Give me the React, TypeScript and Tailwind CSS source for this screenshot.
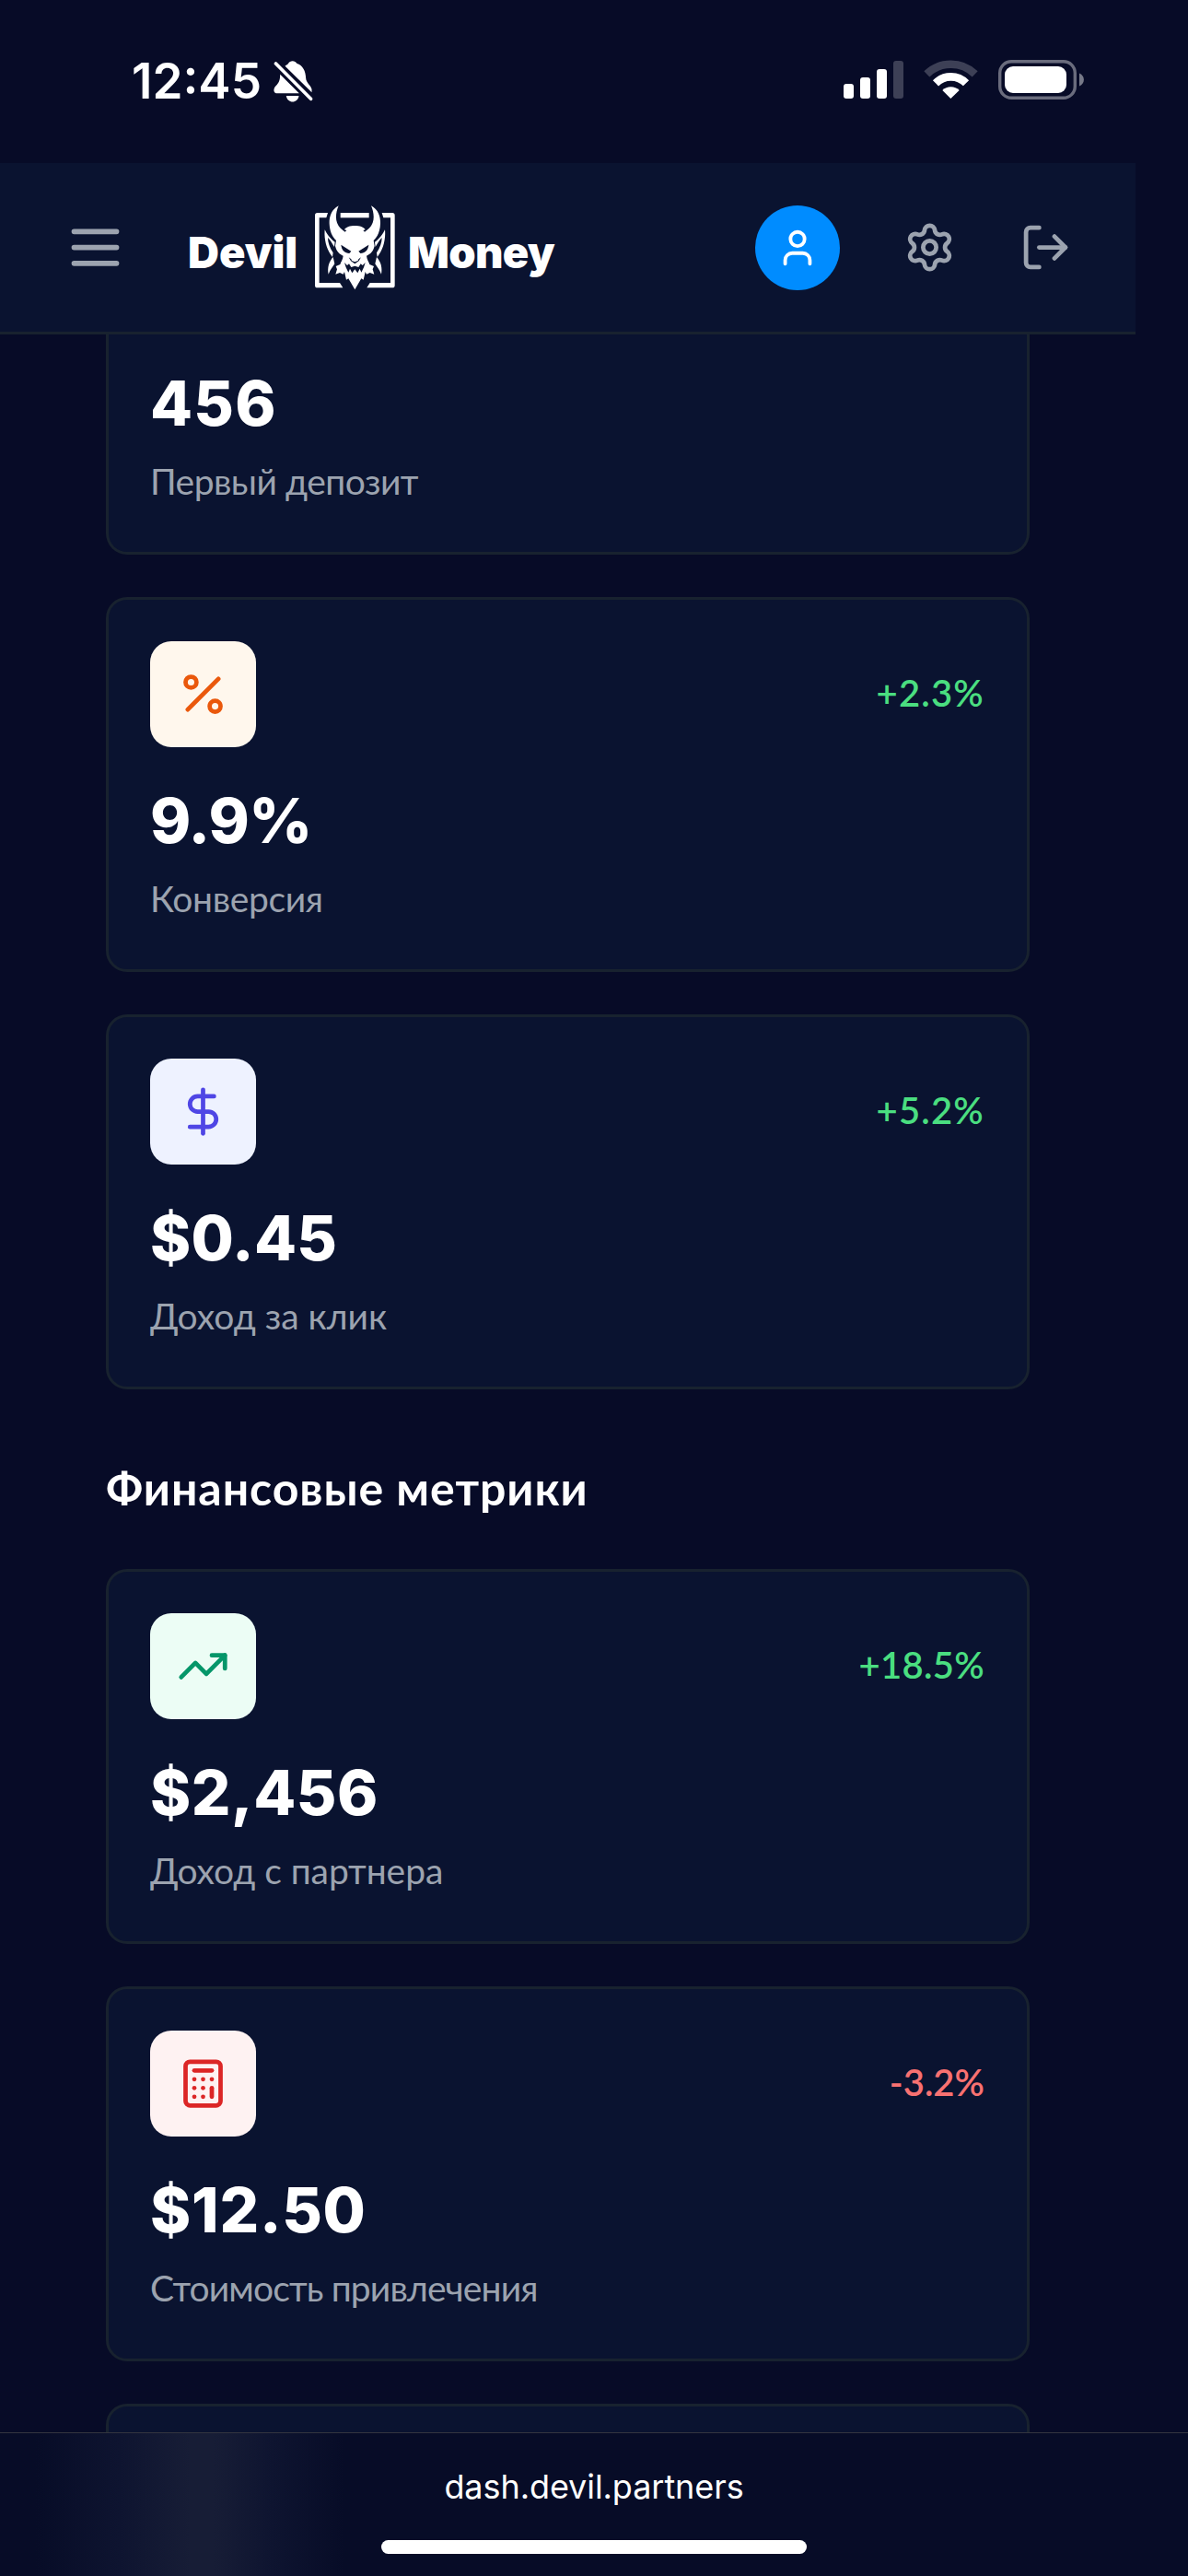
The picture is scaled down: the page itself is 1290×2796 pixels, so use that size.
import { Calculator, DollarSign, LogOut, Percent, Settings, TrendingUp, User } from "lucide-react"
import type { LucideIcon } from "lucide-react"

type Metric = {
  id: string
  icon: LucideIcon
  tile: string
  change: string
  changeStyle: string
  value: string
  valueStyle: string
  label: string
  labelStyle: string
}

const trafficMetrics: Metric[] = [
  {
    id: "conversion",
    icon: Percent,
    tile: "bg-[#fff7ed] text-[#ea580c]",
    change: "+2.3%",
    changeStyle: "text-[#4ade80] tracking-[0.03em]",
    value: "9.9%",
    valueStyle: "tracking-[-0.01em]",
    label: "Конверсия",
    labelStyle: "tracking-[-0.009em]",
  },
  {
    id: "epc",
    icon: DollarSign,
    tile: "bg-[#eef2ff] text-[#4f46e5]",
    change: "+5.2%",
    changeStyle: "text-[#4ade80] tracking-[0.03em]",
    value: "$0.45",
    valueStyle: "tracking-[0.004em]",
    label: "Доход за клик",
    labelStyle: "tracking-[0em]",
  },
]

const financeMetrics: Metric[] = [
  {
    id: "revenue",
    icon: TrendingUp,
    tile: "bg-[#ecfdf5] text-[#059669]",
    change: "+18.5%",
    changeStyle: "text-[#4ade80] tracking-[0.008em]",
    value: "$2,456",
    valueStyle: "tracking-[0.008em]",
    label: "Доход с партнера",
    labelStyle: "tracking-[-0.002em]",
  },
  {
    id: "cost",
    icon: Calculator,
    tile: "bg-[#fef2f2] text-[#dc2626]",
    change: "-3.2%",
    changeStyle: "text-[#f87171] tracking-[0em]",
    value: "$12.50",
    valueStyle: "tracking-[0.012em]",
    label: "Стоимость привлечения",
    labelStyle: "tracking-[-0.022em]",
  },
]

function StatusBar() {
  return (
    <div className="flex h-[177px] shrink-0 justify-between pl-[143px] pr-[113px] pt-[65px]">
      <div className="flex items-start">
        <span className="-mt-[9px] w-[154px] font-['Inter',sans-serif] text-[53px] font-semibold leading-[64px] text-white">
          12:45
        </span>
        <svg className="h-[46px] w-[43px]" viewBox="590 75 128 138" fill="white">
          <path d="M627 95C632 91 636 89 638 86C642 76 661 76 665 86C685 93 694 110 695 135C696 150 711 158 714 170V181Z" />
          <path d="M611 122L673 184H598C588 181 589 168 597 160C608 148 611 140 611 122Z" />
          <path d="M631 192H672C669 218 634 218 631 192Z" />
          <path d="M597 87L711 202" stroke="white" strokeWidth="11" strokeLinecap="round" />
        </svg>
      </div>
      <div className="flex items-start">
        <svg className="h-[42px] w-[65px]" viewBox="0 0 65 42" fill="white">
          <rect x="0" y="26" width="11" height="16" rx="3" />
          <rect x="18" y="19" width="11" height="23" rx="3" />
          <rect x="36" y="10" width="11" height="32" rx="3" />
          <rect x="54" y="1" width="11" height="41" rx="3" opacity="0.22" />
        </svg>
        <svg className="ml-[22px] h-[43px] w-[59px]" viewBox="369 75 177 129" fill="none" stroke="white" strokeWidth="26">
          <path d="M379 121A113 113 0 0 1 536 121" opacity="0.22" />
          <path d="M408 151A70 70 0 0 1 507 151" />
          <path d="M457 201L430 174A40 40 0 0 1 485 174Z" fill="white" stroke="none" />
        </svg>
        <svg className="ml-[22px] h-[43px] w-[93px]" viewBox="0 0 93 43">
          <rect x="1.7" y="1.7" width="81.6" height="39.6" rx="12.5" fill="none" stroke="white" strokeWidth="3.4" opacity="0.4" />
          <rect x="7" y="7" width="67" height="29" rx="9" fill="white" />
          <path d="M88 14.5C94.5 17 94.5 26 88 28.5Z" fill="white" opacity="0.45" />
        </svg>
      </div>
    </div>
  )
}

function DevilMark() {
  return (
    <svg className="h-[92px] w-[87px]" viewBox="66 38 261 276" fill="white">
      <path d="M108 62L103 78H80V290H147L157 306H74Q66 306 66 298V70Q66 62 74 62Z" />
      <path d="M284 62L289 78H312V290H245L235 306H318Q326 306 326 298V70Q326 62 318 62Z" />
      <path d="M149 62H242V78H149Z" />
      <path d="M143 39C118 52 112 78 113 98C114 122 122 140 135 152L132 170C137 190 146 196 158 202C157 214 150 222 148 230L134 236L138 246L133 262L147 257L158 262L162 254L168 280L175 276L196 312L217 276L224 280L230 254L234 262L245 257L259 262L254 246L258 236L244 230C242 222 235 214 234 202C246 196 255 190 260 170L257 152C270 140 278 122 279 98C280 78 274 52 249 39C257 58 260 78 254 94C248 110 238 116 228 124L223 119L230 117C222 100 170 100 162 117L169 119L164 124C154 116 144 110 138 94C132 78 135 58 143 39Z" />
      <path d="M98 117C95 150 104 182 123 206L125 192C114 176 108 158 108 143C116 150 121 160 129 173L131 157C118 148 106 134 98 117Z" />
      <path d="M294 117C297 150 288 182 269 206L267 192C278 176 284 158 284 143C276 150 271 160 263 173L261 157C274 148 286 134 294 117Z" />
      <path d="M125 206C111 222 106 240 110 262C116 246 124 238 130 228Z" />
      <path d="M267 206C281 222 286 240 282 262C276 246 268 238 262 228Z" />
      <g fill="#0a1330">
        <path d="M151 166L184 187L178 194C163 193 153 184 151 166Z" />
        <path d="M241 166L208 187L214 194C229 193 239 184 241 166Z" />
        <path d="M176 207L183 219L196 228L209 219L216 207L208 213L206 218L196 222L186 218L184 213Z" />
        <path d="M162 224L171 233L177 228L184 239L196 235L208 239L215 228L221 233L230 224L225 240L217 256L212 244L205 258L196 246L187 258L180 244L175 256L167 240Z" />
      </g>
    </svg>
  )
}

function Header() {
  return (
    <header className="flex h-[186px] w-[1233px] shrink-0 items-center border-b-[3px] border-[#18222f] bg-[#0a1330] pl-[69px] pr-[69px]">
      <svg className="h-[69px] w-[69px] text-[#9ca3af]" viewBox="0 0 24 24" fill="none" stroke="currentColor" strokeWidth="2" strokeLinecap="round">
        <path d="M4 6h16M4 12h16M4 18h16" />
      </svg>
      <div className="ml-[66px] flex items-center font-['Inter',sans-serif] text-[47px] font-black leading-[56px] text-white">
        <span className="w-[138px] pt-[11px]">Devil</span>
        <DevilMark />
        <span className="ml-[14px] pt-[11px] tracking-[-0.015em]">Money</span>
      </div>
      <div className="ml-auto flex items-center gap-[69px] text-[#9ca3af]">
        <div className="flex h-[92px] w-[92px] items-center justify-center rounded-full bg-[#008cff] text-white">
          <User size={46} />
        </div>
        <Settings size={57} />
        <LogOut size={57} />
      </div>
    </header>
  )
}

function MetricText({ value, valueStyle, label, labelStyle }: Pick<Metric, "value" | "valueStyle" | "label" | "labelStyle">) {
  return (
    <>
      <p className={`font-['Inter',sans-serif] text-[67px] font-extrabold leading-[93px] text-white ${valueStyle}`}>{value}</p>
      <p className={`mt-[10px] text-[39px] leading-[57px] text-[#9ca3af] ${labelStyle}`}>{label}</p>
    </>
  )
}

function MetricCard({ metric }: { metric: Metric }) {
  const Icon = metric.icon

  return (
    <div className="h-[407px] shrink-0 rounded-[23px] border-[3px] border-[#18222f] bg-[#0a1330] pl-[45px] pr-[46px] pt-[45px]">
      <div className="mb-[33px] flex items-center justify-between">
        <div className={`flex h-[115px] w-[115px] items-center justify-center rounded-[23px] ${metric.tile}`}>
          <Icon size={57} />
        </div>
        <span className={`pb-[2px] text-[40px] font-semibold leading-[57px] ${metric.changeStyle}`}>{metric.change}</span>
      </div>
      <MetricText {...metric} />
    </div>
  )
}

function BrowserBar() {
  return (
    <footer className="flex h-[156px] shrink-0 flex-col items-center border-t border-[#33353f] bg-[#070c27] bg-[linear-gradient(90deg,transparent_3%,#0e1430_10%,#171d36_16%,#171d36_18%,#0e1430_23%,transparent_29%)]">
      <span className="mt-[34px] font-['Inter',sans-serif] text-[36px] leading-[48px] tracking-[-0.002em] text-white">
        dash.devil.partners
      </span>
      <div className="mt-[34px] h-[15px] w-[462px] rounded-full bg-white" />
    </footer>
  )
}

export default function App() {
  return (
    <div className="flex h-[2796px] w-[1290px] flex-col overflow-hidden bg-[#070b27] font-['Lato',sans-serif]">
      <StatusBar />
      <Header />
      <main className="flex min-h-0 w-[1118px] flex-1 flex-col overflow-hidden pl-[115px]">
        {/* card scrolled half way under the header */}
        <div className="flex h-[239px] shrink-0 flex-col justify-end rounded-b-[23px] border-[3px] border-t-0 border-[#18222f] bg-[#0a1330] pb-[48px] pl-[45px]">
          <MetricText value="456" valueStyle="tracking-[0.018em]" label="Первый депозит" labelStyle="tracking-[-0.013em]" />
        </div>
        <div className="mt-[46px] flex shrink-0 flex-col gap-[46px]">
          {trafficMetrics.map((metric) => (
            <MetricCard key={metric.id} metric={metric} />
          ))}
        </div>
        <h2 className="mb-[48px] mt-[67px] shrink-0 text-[50px] font-bold leading-[80px] tracking-[0.019em] text-white">
          Финансовые метрики
        </h2>
        <div className="flex shrink-0 flex-col gap-[46px]">
          {financeMetrics.map((metric) => (
            <MetricCard key={metric.id} metric={metric} />
          ))}
          <div className="h-[407px] rounded-[23px] border-[3px] border-[#18222f] bg-[#0a1330]" />
        </div>
      </main>
      <BrowserBar />
    </div>
  )
}
